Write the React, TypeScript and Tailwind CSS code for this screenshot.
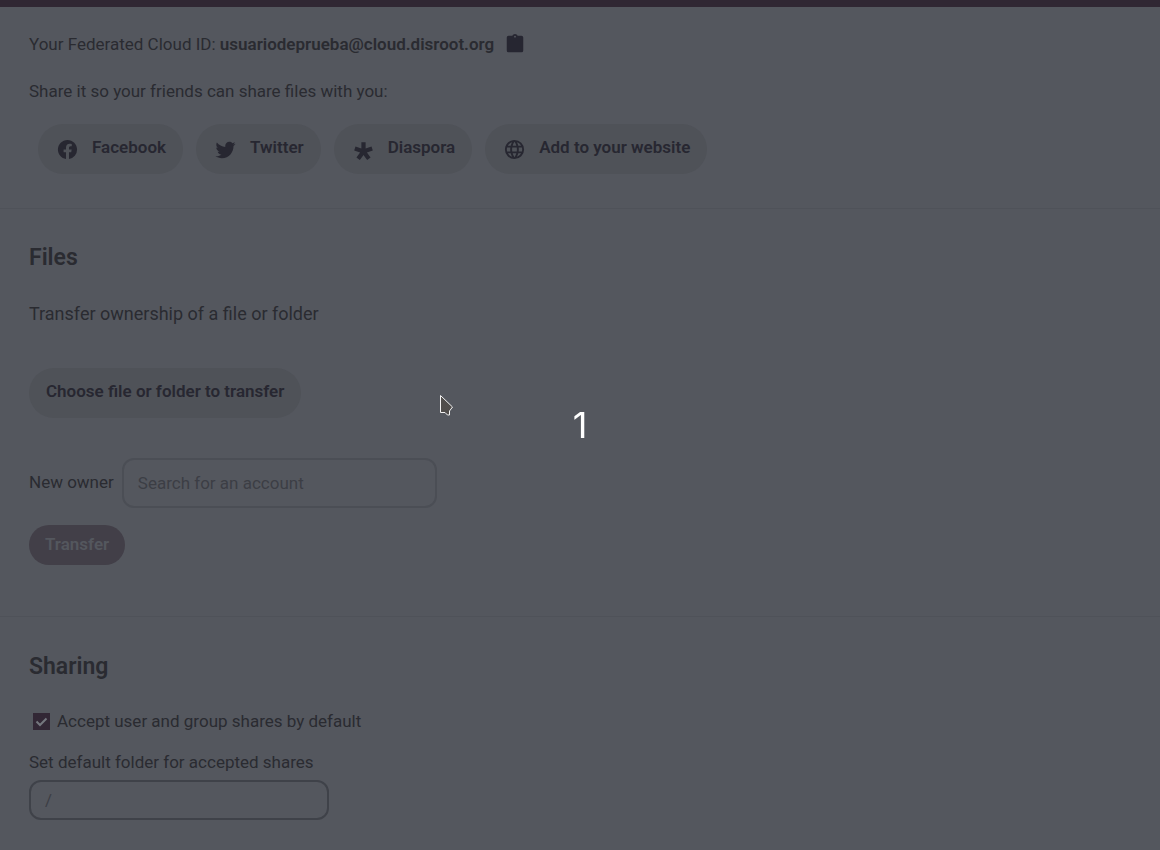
import type { ReactNode } from 'react';
import clsx from 'clsx';

const FACEBOOK =
  'M12 2.04C6.5 2.04 2 6.53 2 12.06C2 17.06 5.66 21.21 10.44 21.96V14.96H7.9V12.06H10.44V9.85C10.44 7.34 11.93 5.96 14.22 5.96C15.31 5.96 16.45 6.15 16.45 6.15V8.62H15.19C13.95 8.62 13.56 9.39 13.56 10.18V12.06H16.34L15.89 14.96H13.56V21.96A10 10 0 0 0 22 12.06C22 6.53 17.5 2.04 12 2.04Z';
const TWITTER =
  'M22.46,6C21.69,6.35 20.86,6.58 20,6.69C20.88,6.16 21.56,5.32 21.88,4.31C21.05,4.81 20.13,5.16 19.16,5.36C18.37,4.5 17.26,4 16,4C13.65,4 11.73,5.92 11.73,8.29C11.73,8.63 11.77,8.96 11.84,9.27C8.28,9.09 5.11,7.38 3,4.79C2.63,5.42 2.42,6.16 2.42,6.94C2.42,8.43 3.17,9.75 4.33,10.5C3.62,10.5 2.96,10.3 2.38,10V10.03C2.38,12.11 3.86,13.85 5.82,14.24C5.46,14.34 5.08,14.39 4.69,14.39C4.42,14.39 4.15,14.36 3.89,14.31C4.43,16 6,17.26 7.89,17.29C6.43,18.45 4.58,19.13 2.56,19.13C2.22,19.13 1.88,19.11 1.54,19.07C3.44,20.29 5.7,21 8.12,21C16,21 20.33,14.46 20.33,8.79C20.33,8.6 20.33,8.42 20.32,8.23C21.16,7.63 21.88,6.87 22.46,6Z';
const DIASPORA =
  'M9.8 4.5H14.2V10.97L20.35 8.97L21.71 13.16L15.56 15.16L19.37 20.4L15.81 22.98L12 17.74L8.19 22.98L4.63 20.4L8.44 15.16L2.29 13.16L3.65 8.97L9.8 10.97Z';
const WEB =
  'M16.36,14C16.44,13.34 16.5,12.68 16.5,12C16.5,11.32 16.44,10.66 16.36,10H19.74C19.9,10.64 20,11.31 20,12C20,12.69 19.9,13.36 19.74,14M14.59,19.56C15.19,18.45 15.65,17.25 15.97,16H18.92C17.96,17.65 16.43,18.93 14.59,19.56M14.34,14H9.66C9.56,13.34 9.5,12.68 9.5,12C9.5,11.32 9.56,10.65 9.66,10H14.34C14.43,10.65 14.5,11.32 14.5,12C14.5,12.68 14.43,13.34 14.34,14M12,19.96C11.17,18.76 10.5,17.43 10.09,16H13.91C13.5,17.43 12.83,18.76 12,19.96M8,8H5.08C6.03,6.34 7.57,5.06 9.4,4.44C8.8,5.55 8.35,6.75 8,8M5.08,16H8C8.35,17.25 8.8,18.45 9.4,19.56C7.57,18.93 6.03,17.65 5.08,16M4.26,14C4.1,13.36 4,12.69 4,12C4,11.31 4.1,10.64 4.26,10H7.64C7.56,10.66 7.5,11.32 7.5,12C7.5,12.68 7.56,13.34 7.64,14M12,4.03C12.83,5.23 13.5,6.57 13.91,8H10.09C10.5,6.57 11.17,5.23 12,4.03M18.92,8H15.97C15.65,6.75 15.19,5.55 14.59,4.44C16.43,5.07 17.96,6.34 18.92,8M12,2C6.47,2 2,6.5 2,12A10,10 0 0,0 12,22A10,10 0 0,0 22,12A10,10 0 0,0 12,2Z';
const CLIPBOARD =
  'M12,3A1,1 0 0,1 13,4A1,1 0 0,1 12,5A1,1 0 0,1 11,4A1,1 0 0,1 12,3M19,3H14.82C14.4,1.84 13.3,1 12,1C10.7,1 9.6,1.84 9.18,3H5A2,2 0 0,0 3,5V19A2,2 0 0,0 5,21H19A2,2 0 0,0 21,19V5A2,2 0 0,0 19,3Z';

const shareTargets = [
  { label: 'Facebook', icon: FACEBOOK },
  { label: 'Twitter', icon: TWITTER },
  { label: 'Diaspora', icon: DIASPORA },
  { label: 'Add to your website', icon: WEB },
];

const Icon = ({ path, className }: { path: string; className: string }) => (
  <svg viewBox="0 0 24 24" fill="currentColor" fillRule="evenodd" className={clsx('shrink-0', className)} aria-hidden="true">
    <path d={path} />
  </svg>
);

const Section = ({ className, children }: { className: string; children: ReactNode }) => (
  <section className={clsx('flex flex-col items-start px-[29px]', className)}>{children}</section>
);

const FederatedCloud = () => (
  <Section className="border-b border-[#4f5259] pt-[23px] pb-[34px]">
    <div className="flex items-center gap-[10px]">
      <p>
        Your Federated Cloud ID: <strong className="font-semibold">usuariodeprueba@cloud.disroot.org</strong>
      </p>
      <button type="button" aria-label="Copy to clipboard">
        <Icon path={CLIPBOARD} className="size-[22px] text-[#262631]" />
      </button>
    </div>
    <p className="mt-[19px]">Share it so your friends can share files with you:</p>
    <div className="mt-[19px] ml-[9px] flex flex-wrap gap-[13px]">
      {shareTargets.map(({ label, icon }) => (
        <button
          key={label}
          type="button"
          className="flex h-[50px] items-center gap-[13px] rounded-full bg-[#4f5258] pr-[17px] pl-[18px] font-semibold text-[#272731]"
        >
          <Icon path={icon} className="size-[23px]" />
          <span className="pb-1">{label}</span>
        </button>
      ))}
    </div>
  </Section>
);

const Files = () => (
  <Section className="border-b border-[#4f5259] pt-[33px] pb-[51px]">
    <h2 className="text-[23px] leading-8 font-semibold">Files</h2>
    <p className="mt-6 text-lg leading-8">Transfer ownership of a file or folder</p>
    <button
      type="button"
      className="mt-[38px] h-[50px] rounded-full bg-[#4f5258] px-[17px] pb-1 font-semibold text-[#272731]"
    >
      Choose file or folder to transfer
    </button>
    <div className="mt-10 flex items-center gap-2">
      <label htmlFor="new-owner" className="pb-0.5">
        New owner
      </label>
      <input
        id="new-owner"
        type="search"
        placeholder="Search for an account"
        className="h-[50px] w-[315px] rounded-xl border-2 border-[#4b4e55] px-[14px] outline-none placeholder:text-[#3c3e45]"
      />
    </div>
    <button type="button" className="mt-[17px] h-10 rounded-full bg-[#423f48] px-4 pb-0.5 font-semibold text-[#54575e]">
      Transfer
    </button>
  </Section>
);

const Sharing = () => (
  <Section className="border-b-4 border-[#4f5259] pt-[34px] pb-[30px]">
    <h2 className="text-[23px] leading-8 font-semibold">Sharing</h2>
    <label className="mt-6 flex items-center pl-1">
      <input
        type="checkbox"
        defaultChecked
        className="peer size-[17px] appearance-none bg-[#322735]"
      />
      <svg
        viewBox="0 0 17 17"
        fill="none"
        stroke="#74777e"
        strokeWidth="2"
        className="pointer-events-none invisible -ml-[17px] size-[17px] peer-checked:visible"
        aria-hidden="true"
      >
        <path d="M3.500 8.500l3.500 3.500 6.500-6.500" />
      </svg>
      <span className="ml-[7px]">Accept user and group shares by default</span>
    </label>
    <label htmlFor="share-folder" className="mt-[13px]">
      Set default folder for accepted shares
    </label>
    <input
      id="share-folder"
      type="text"
      placeholder="/"
      className="mt-1 h-10 w-[300px] rounded-xl border-2 border-[#3f4249] px-[14px] outline-none placeholder:text-[#3c3e45]"
    />
  </Section>
);

const Countdown = () => (
  <div className="pointer-events-none fixed inset-0 flex items-center justify-center">
    <span className="font-['Inter',sans-serif] text-4xl leading-none text-white">1</span>
    <svg viewBox="0 0 14 22" className="absolute top-[395px] left-[440px] h-[22px] w-[14px]" aria-hidden="true">
      <path d="M.5.5v17h4.500l2.500 2.500 2 0v-4l3-4z" fill="#504d4b" stroke="#f2f2f2" />
    </svg>
  </div>
);

export default function App() {
  return (
    <div className="min-h-screen bg-[#54575e] font-['Roboto',sans-serif] text-[17px] leading-7 text-[#2a2b31]">
      <header className="h-[7px] bg-[#302733]" />
      <main>
        <FederatedCloud />
        <Files />
        <Sharing />
      </main>
      <Countdown />
    </div>
  );
}
